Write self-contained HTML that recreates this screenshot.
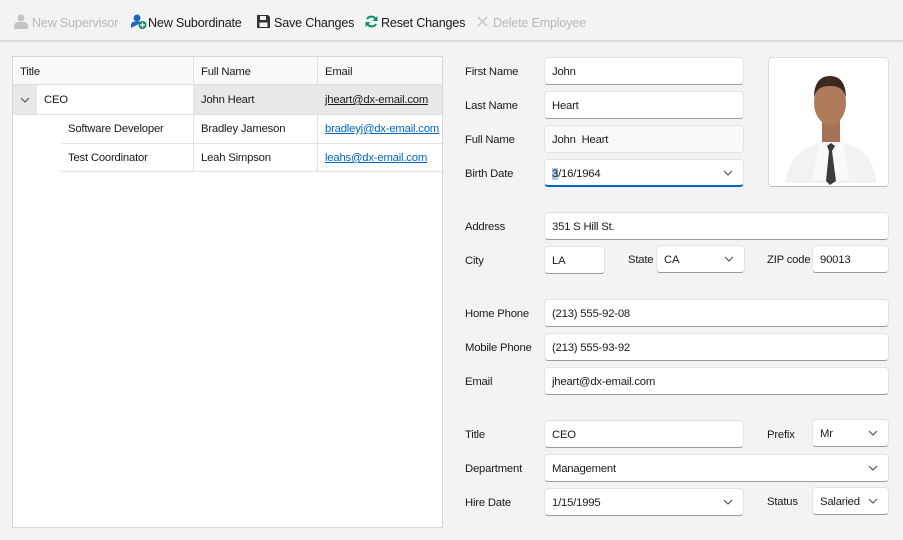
<!DOCTYPE html>
<html><head><style>
*{box-sizing:border-box;margin:0;padding:0}
body{width:903px;height:540px;background:#f3f3f3;font-family:"Liberation Sans",sans-serif;font-size:11.3px;letter-spacing:-0.2px;color:#1a1a1a;position:relative;overflow:hidden}
.a{position:absolute}
.tb{top:0;left:0;width:903px;height:42px;border-bottom:2px solid #dcdcdc;background:#f3f3f3}
.tt{position:absolute;top:16px;font-size:12.6px;letter-spacing:-0.2px;white-space:nowrap}
.dis{color:#b8b8b8}
.grid{left:12px;top:56px;width:431px;height:472px;background:#fff;border:1px solid #d6d6d6}
.cell{position:absolute;padding-left:7px;line-height:30px;white-space:nowrap}
.lnk{color:#0067c0;text-decoration:underline}
.lbl{position:absolute;left:465px;margin-top:2px}
.in{position:absolute;height:28px;background:#fff;border:1px solid #e3e3e3;border-bottom:1px solid #9b9b9b;border-radius:4px;padding-left:7px;line-height:28px;white-space:nowrap}
.in.ro{background:#f9f9f9;border-bottom-color:#e3e3e3}
.chev{position:absolute;right:10px;top:10px}
.a.l{margin-top:2px}
</style></head><body>
<div class="a tb">
 <svg class="a" style="left:14px;top:14px" width="14" height="15" viewBox="0 0 14 15"><circle cx="7" cy="4" r="3.5" fill="#c4c4c4"/><path d="M0 15v-3c0-2 2-4 4-4h6c2 0 4 2 4 4v3z" fill="#c4c4c4"/></svg>
 <div class="tt dis" style="left:32px">New Supervisor</div>
 <svg class="a" style="left:131px;top:14px" width="16" height="15" viewBox="0 0 16 15"><circle cx="6" cy="4" r="3.5" fill="#1f66c1"/><path d="M0 14v-3c0-2 2-3.5 4-3.5h4c1 0 2 .5 2.5 1z" fill="#1f66c1"/><circle cx="11.5" cy="11" r="4" fill="#0f8a6a"/><path d="M11.5 8.5v5M9 11h5" stroke="#fff" stroke-width="1.3"/></svg>
 <div class="tt" style="left:148px">New Subordinate</div>
 <svg class="a" style="left:257px;top:15px" width="13" height="13" viewBox="0 0 13 13"><path d="M0 0h11l2 2v11H0z" fill="#333"/><rect x="3" y="1" width="6" height="4" fill="#f3f3f3"/><rect x="2.5" y="7.5" width="8" height="4.5" fill="#f3f3f3"/></svg>
 <div class="tt" style="left:274px">Save Changes</div>
 <svg class="a" style="left:365px;top:15px" width="13" height="13" viewBox="0 0 13 13"><path d="M11 5A5 5 0 0 0 2 4M2 8a5 5 0 0 0 9 1" stroke="#108a6c" stroke-width="2" fill="none"/><path d="M12.5 1v5h-5zM.5 12V7h5z" fill="#108a6c"/></svg>
 <div class="tt" style="left:381px">Reset Changes</div>
 <svg class="a" style="left:477px;top:16px" width="11" height="11" viewBox="0 0 11 11"><path d="M1 1l9 9M10 1l-9 9" stroke="#c4c4c4" stroke-width="1.5"/></svg>
 <div class="tt dis" style="left:493px">Delete Employee</div>
</div>
<div class="a grid">
 <div class="a" style="left:0;top:0;width:429px;height:28px;border-bottom:1px solid #e0e0e0;background:#f9f9f9"></div>
 <div class="cell" style="left:0;top:0">Title</div>
 <div class="cell" style="left:181px;top:0">Full Name</div>
 <div class="cell" style="left:305px;top:0">Email</div>
 <div class="a" style="left:180px;top:0;width:1px;height:114px;background:#e0e0e0"></div>
 <div class="a" style="left:304px;top:0;width:1px;height:114px;background:#e0e0e0"></div>
 <div class="a" style="left:0;top:28px;width:24px;height:29px;background:#e8e8e8"></div>
 <div class="a" style="left:180px;top:28px;width:249px;height:29px;background:#e8e8e8"></div>
 <div class="a" style="left:0;top:57px;width:429px;height:1px;background:#e0e0e0"></div>
 <div class="a" style="left:48px;top:86px;width:381px;height:1px;background:#e0e0e0"></div>
 <div class="a" style="left:48px;top:114px;width:381px;height:1px;background:#e0e0e0"></div>
 <svg class="a" style="left:7px;top:40px" width="10" height="6" viewBox="0 0 10 6"><path d="M1 1l4 4 4-4" stroke="#444" fill="none"/></svg>
 <div class="cell" style="left:24px;top:28px">CEO</div>
 <div class="cell" style="left:181px;top:28px">John Heart</div>
 <div class="cell" style="left:305px;top:28px;text-decoration:underline">jheart@dx-email.com</div>
 <div class="cell" style="left:48px;top:57px">Software Developer</div>
 <div class="cell" style="left:181px;top:57px">Bradley Jameson</div>
 <div class="cell lnk" style="left:305px;top:57px">bradleyj@dx-email.com</div>
 <div class="cell" style="left:48px;top:86px">Test Coordinator</div>
 <div class="cell" style="left:181px;top:86px">Leah Simpson</div>
 <div class="cell lnk" style="left:305px;top:86px">leahs@dx-email.com</div>
</div>

<div class="lbl" style="top:64px">First Name</div><div class="in" style="left:544px;top:57px;width:200px">John</div>
<div class="lbl" style="top:98px">Last Name</div><div class="in" style="left:544px;top:91px;width:200px">Heart</div>
<div class="lbl" style="top:132px">Full Name</div><div class="in ro" style="left:544px;top:125px;width:200px">John&nbsp; Heart</div>
<div class="lbl" style="top:166px">Birth Date</div><div class="in" style="left:544px;top:159px;width:200px;border-bottom:2px solid #0067c0"><span style="background:#a9c7ea">3</span>/16/1964<svg class="chev" width="10" height="6" viewBox="0 0 10 6"><path d="M1 1l4 4 4-4" stroke="#444" fill="none"/></svg></div>
<div class="a" style="left:768px;top:57px;width:121px;height:130px;background:#fff;border:1px solid #ddd;border-bottom-color:#bbb;border-radius:4px;overflow:hidden">
 <svg width="121" height="130" viewBox="0 0 121 130"><path d="M16 125c4-20 12-34 34-40l12-4 14 4c22 6 28 18 32 40z" fill="#f2f2f2"/><path d="M50 82l12 12 12-12 6 40H44z" fill="#fafafa"/><path d="M58 88l4-3 4 3-3 5 4 30-6 4-4-4 3-30z" fill="#3a3c40"/><rect x="53" y="62" width="18" height="22" fill="#a47355"/><ellipse cx="61" cy="45" rx="16" ry="22" fill="#b07b5b"/><path d="M45 40c0-15 6-22 16-22s16 7 16 22c-2-8-6-12-16-12s-14 4-16 12z" fill="#3a2a20"/></svg>
</div>

<div class="lbl" style="top:219px">Address</div><div class="in" style="left:544px;top:212px;width:345px">351 S Hill St.</div>
<div class="lbl" style="top:253px">City</div><div class="in" style="left:544px;top:246px;width:61px">LA</div>
<div class="a l" style="left:628px;top:252px">State</div><div class="in" style="left:656px;top:245px;width:89px">CA<svg class="chev" width="10" height="6" viewBox="0 0 10 6"><path d="M1 1l4 4 4-4" stroke="#444" fill="none"/></svg></div>
<div class="a l" style="left:767px;top:252px">ZIP code</div><div class="in" style="left:812px;top:245px;width:77px">90013</div>
<div class="lbl" style="top:306px">Home Phone</div><div class="in" style="left:544px;top:299px;width:345px">(213) 555-92-08</div>
<div class="lbl" style="top:340px">Mobile Phone</div><div class="in" style="left:544px;top:333px;width:345px">(213) 555-93-92</div>
<div class="lbl" style="top:374px">Email</div><div class="in" style="left:544px;top:367px;width:345px">jheart@dx-email.com</div>
<div class="lbl" style="top:427px">Title</div><div class="in" style="left:544px;top:420px;width:200px">CEO</div>
<div class="a l" style="left:767px;top:427px">Prefix</div><div class="in" style="left:812px;top:419px;width:77px">Mr<svg class="chev" width="10" height="6" viewBox="0 0 10 6"><path d="M1 1l4 4 4-4" stroke="#444" fill="none"/></svg></div>
<div class="lbl" style="top:461px">Department</div><div class="in" style="left:544px;top:454px;width:345px">Management<svg class="chev" width="10" height="6" viewBox="0 0 10 6"><path d="M1 1l4 4 4-4" stroke="#444" fill="none"/></svg></div>
<div class="lbl" style="top:495px">Hire Date</div><div class="in" style="left:544px;top:488px;width:200px">1/15/1995<svg class="chev" width="10" height="6" viewBox="0 0 10 6"><path d="M1 1l4 4 4-4" stroke="#444" fill="none"/></svg></div>
<div class="a l" style="left:767px;top:494px">Status</div><div class="in" style="left:812px;top:487px;width:77px">Salaried<svg class="chev" width="10" height="6" viewBox="0 0 10 6"><path d="M1 1l4 4 4-4" stroke="#444" fill="none"/></svg></div>
</body></html>
